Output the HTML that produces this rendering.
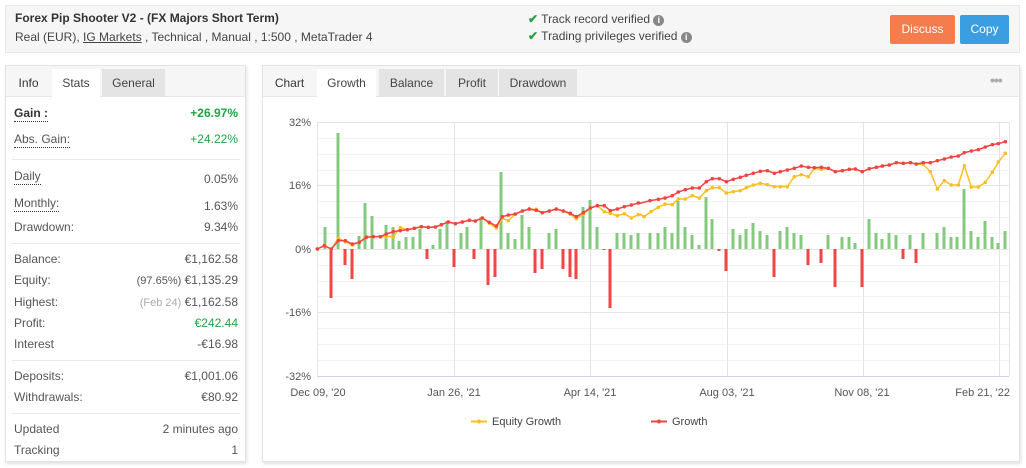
<!DOCTYPE html>
<html><head><meta charset="utf-8"><style>
*{margin:0;padding:0;box-sizing:border-box}
body{width:1026px;height:468px;background:#fff;font-family:"Liberation Sans",sans-serif;font-size:12px;color:#555;position:relative;overflow:hidden}
.a{position:absolute;white-space:nowrap}
.hdr{left:5px;top:5px;width:1015px;height:48px;background:#f6f6f6;border:1px solid #e6e6e6}
.panel{background:#fff;border:1px solid #e3e3e3;box-shadow:1px 2px 3px rgba(0,0,0,.12)}
.tabbar{background:#f6f6f6;border-bottom:1px solid #e6e6e6}
.tab{position:absolute;top:3px;height:28px;line-height:28px;text-align:center;font-size:12px;color:#444}
.g{background:#e4e4e4}
.w{background:#fff}
.l{left:8px}
.r{right:9px;text-align:right}
.row{position:absolute;left:0;width:241px;height:16px;line-height:16px}
.row span{position:absolute}
.dot{border-bottom:1px dotted #333}
.sep{position:absolute;left:6px;width:228px;height:1px;background:#e8e8e8}
.btn{position:absolute;top:15px;height:29px;line-height:29px;color:#fff;text-align:center;font-size:12px;border-radius:2px}
</style></head><body>
<div class="a hdr"></div>
<div class="a" style="left:15px;top:11px;font-weight:bold;color:#333;font-size:12px">Forex Pip Shooter V2 - (FX Majors Short Term)</div>
<div class="a" style="left:15px;top:30px;color:#444">Real (EUR), <span style="text-decoration:underline">IG Markets</span> , Technical , Manual , 1:500 , MetaTrader 4</div>
<div class="a" style="left:528px;top:12px;color:#444"><span style="color:#21a243;font-weight:bold">✔</span> Track record verified <span style="display:inline-block;width:11px;height:11px;border-radius:50%;background:#888;color:#fff;font-size:9px;line-height:11px;text-align:center;font-weight:bold">i</span></div>
<div class="a" style="left:528px;top:29px;color:#444"><span style="color:#21a243;font-weight:bold">✔</span> Trading privileges verified <span style="display:inline-block;width:11px;height:11px;border-radius:50%;background:#888;color:#fff;font-size:9px;line-height:11px;text-align:center;font-weight:bold">i</span></div>
<div class="btn" style="left:890px;width:65px;background:#f47c4d">Discuss</div>
<div class="btn" style="left:960px;width:49px;background:#3a9ee0">Copy</div>

<div class="a panel" style="left:5px;top:65px;width:241px;height:397px">
 <div class="a tabbar" style="left:0;top:0;width:239px;height:31px"></div>
 <div class="tab" style="left:0;width:45px;color:#333">Info</div>
 <div class="tab w" style="left:46px;width:48px;height:29px">Stats</div>
 <div class="tab g" style="left:96px;width:63px">General</div>
 <div class="row" style="top:39px"><span class="l dot" style="font-weight:bold;color:#333">Gain :</span><span class="r" style="color:#21a243;font-weight:bold">+26.97%</span></div>
 <div class="row" style="top:65px"><span class="l dot">Abs. Gain:</span><span class="r" style="color:#21a243">+24.22%</span></div>
 <div class="sep" style="top:93px"></div>
 <div class="row" style="top:102px"><span class="l dot">Daily</span><span class="r" style="top:3px">0.05%</span></div>
 <div class="row" style="top:129px"><span class="l dot">Monthly:</span><span class="r" style="top:3px">1.63%</span></div>
 <div class="row" style="top:153px"><span class="l">Drawdown:</span><span class="r">9.34%</span></div>
 <div class="sep" style="top:177px"></div>
 <div class="row" style="top:185px"><span class="l">Balance:</span><span class="r">€1,162.58</span></div>
 <div class="row" style="top:206px"><span class="l">Equity:</span><span class="r"><span style="position:static;font-size:11px">(97.65%)</span> €1,135.29</span></div>
 <div class="row" style="top:228px"><span class="l">Highest:</span><span class="r"><span style="position:static;font-size:11px;color:#aaa">(Feb 24)</span> €1,162.58</span></div>
 <div class="row" style="top:249px"><span class="l">Profit:</span><span class="r" style="color:#21a243">€242.44</span></div>
 <div class="row" style="top:270px"><span class="l">Interest</span><span class="r">-€16.98</span></div>
 <div class="sep" style="top:294px"></div>
 <div class="row" style="top:302px"><span class="l">Deposits:</span><span class="r">€1,001.06</span></div>
 <div class="row" style="top:323px"><span class="l">Withdrawals:</span><span class="r">€80.92</span></div>
 <div class="sep" style="top:347px"></div>
 <div class="row" style="top:355px"><span class="l">Updated</span><span class="r">2 minutes ago</span></div>
 <div class="row" style="top:376px"><span class="l">Tracking</span><span class="r">1</span></div>
</div>

<div class="a panel" style="left:262px;top:65px;width:758px;height:397px">
 <div class="a tabbar" style="left:0;top:0;width:756px;height:31px"></div>
 <div class="tab" style="left:0;width:53px;color:#333">Chart</div>
 <div class="tab w" style="left:54px;width:59px;height:29px">Growth</div>
 <div class="tab g" style="left:116px;width:65px">Balance</div>
 <div class="tab g" style="left:183px;width:52px">Profit</div>
 <div class="tab g" style="left:236px;width:78px">Drawdown</div>
 <div class="a" style="left:727px;top:6px;color:#aaa;font-size:14px;letter-spacing:-1px;font-weight:bold">•••</div>
</div>

<svg class="a" style="left:0;top:0" width="1026" height="468" font-family="Liberation Sans, sans-serif">
 <defs>
  <marker id="my" viewBox="0 0 4 4" refX="2" refY="2" markerWidth="2.4" markerHeight="2.4"><circle cx="2" cy="2" r="2" fill="#fbbf24"/></marker>
  <marker id="mr" viewBox="0 0 4 4" refX="2" refY="2" markerWidth="2.4" markerHeight="2.4"><circle cx="2" cy="2" r="2" fill="#ef4444"/></marker>
 </defs>
 <g stroke="#f2f2f2" stroke-width="1">
  <line x1="317" x2="1009" y1="138.5" y2="138.5"/><line x1="317" x2="1009" y1="154.5" y2="154.5"/><line x1="317" x2="1009" y1="170.5" y2="170.5"/>
  <line x1="317" x2="1009" y1="201.5" y2="201.5"/><line x1="317" x2="1009" y1="217.5" y2="217.5"/><line x1="317" x2="1009" y1="233.5" y2="233.5"/>
  <line x1="317" x2="1009" y1="265.5" y2="265.5"/><line x1="317" x2="1009" y1="281.5" y2="281.5"/><line x1="317" x2="1009" y1="296.5" y2="296.5"/>
  <line x1="317" x2="1009" y1="328.5" y2="328.5"/><line x1="317" x2="1009" y1="344.5" y2="344.5"/><line x1="317" x2="1009" y1="360.5" y2="360.5"/>
 </g>
 <g stroke="#e4e4e4" stroke-width="1">
  <line x1="317" x2="1009" y1="122.5" y2="122.5"/><line x1="317" x2="1009" y1="185.5" y2="185.5"/><line x1="317" x2="1009" y1="249.5" y2="249.5"/><line x1="317" x2="1009" y1="312.5" y2="312.5"/>
  <line x1="317.5" x2="317.5" y1="122" y2="376"/><line x1="454.5" x2="454.5" y1="122" y2="376"/><line x1="590.5" x2="590.5" y1="122" y2="376"/><line x1="727.5" x2="727.5" y1="122" y2="376"/><line x1="863.5" x2="863.5" y1="122" y2="376"/><line x1="999.5" x2="999.5" y1="122" y2="376"/><line x1="1009.5" x2="1009.5" y1="122" y2="376"/>
 </g>
 <line x1="317" x2="1009" y1="376.5" y2="376.5" stroke="#c8d4e6"/>
 <g font-size="11" fill="#555" text-anchor="end">
  <text x="311" y="126">32%</text><text x="311" y="189">16%</text><text x="311" y="253">0%</text><text x="311" y="316">-16%</text><text x="311" y="380">-32%</text>
 </g>
 <g font-size="11" fill="#555" text-anchor="middle">
  <text x="318" y="396">Dec 09, '20</text><text x="454" y="396">Jan 26, '21</text><text x="590" y="396">Apr 14, '21</text><text x="727" y="396">Aug 03, '21</text><text x="862" y="396">Nov 08, '21</text><text x="1010" y="396" text-anchor="end">Feb 21, '22</text>
 </g>
 <g fill="#84c97d">
  <rect x="323.5" y="227" width="3" height="22"/><rect x="336.5" y="133" width="3" height="116"/><rect x="357.5" y="236" width="3" height="13"/><rect x="363.5" y="203" width="3" height="46"/><rect x="370.5" y="216" width="3" height="33"/><rect x="384.5" y="225" width="3" height="24"/><rect x="391.5" y="227" width="3" height="22"/><rect x="397.5" y="241" width="3" height="8"/><rect x="404.5" y="237" width="3" height="12"/><rect x="411.5" y="237" width="3" height="12"/><rect x="418.5" y="229" width="3" height="20"/><rect x="431.5" y="245" width="3" height="4"/><rect x="438.5" y="229" width="3" height="20"/><rect x="445.5" y="221" width="3" height="28"/><rect x="459.5" y="233" width="3" height="16"/><rect x="465.5" y="227" width="3" height="22"/><rect x="479.5" y="217" width="3" height="32"/><rect x="499.5" y="172" width="3" height="77"/><rect x="506.5" y="233" width="3" height="16"/><rect x="513.5" y="239" width="3" height="10"/><rect x="520.5" y="215" width="3" height="34"/><rect x="527.5" y="227" width="3" height="22"/><rect x="547.5" y="233" width="3" height="16"/><rect x="554.5" y="229" width="3" height="20"/><rect x="581.5" y="207" width="3" height="42"/><rect x="588.5" y="200" width="3" height="49"/><rect x="595.5" y="227" width="3" height="22"/><rect x="615.5" y="233" width="3" height="16"/><rect x="622.5" y="233" width="3" height="16"/><rect x="629.5" y="235" width="3" height="14"/><rect x="636.5" y="233" width="3" height="16"/>
  <rect x="648.5" y="233" width="3" height="16"/><rect x="656.5" y="233" width="3" height="16"/><rect x="663.5" y="227" width="3" height="22"/><rect x="670.5" y="233" width="3" height="16"/><rect x="676.5" y="201" width="3" height="48"/><rect x="683.5" y="227" width="3" height="22"/><rect x="690.5" y="235" width="3" height="14"/><rect x="697.5" y="245" width="3" height="4"/><rect x="704.5" y="197" width="3" height="52"/><rect x="710.5" y="219" width="3" height="30"/><rect x="731.5" y="229" width="3" height="20"/><rect x="738.5" y="235" width="3" height="14"/><rect x="744.5" y="229" width="3" height="20"/><rect x="751.5" y="223" width="3" height="26"/><rect x="758.5" y="231" width="3" height="18"/><rect x="765.5" y="235" width="3" height="14"/><rect x="778.5" y="231" width="3" height="18"/><rect x="785.5" y="227" width="3" height="22"/><rect x="792.5" y="233" width="3" height="16"/><rect x="799.5" y="235" width="3" height="14"/><rect x="826.5" y="235" width="3" height="14"/><rect x="840.5" y="237" width="3" height="12"/><rect x="847.5" y="237" width="3" height="12"/><rect x="853.5" y="243" width="3" height="6"/><rect x="867.5" y="219" width="3" height="30"/><rect x="874.5" y="233" width="3" height="16"/><rect x="880.5" y="239" width="3" height="10"/><rect x="887.5" y="233" width="3" height="16"/><rect x="894.5" y="235" width="3" height="14"/><rect x="908.5" y="235" width="3" height="14"/><rect x="921.5" y="233" width="3" height="16"/><rect x="935.5" y="233" width="3" height="16"/><rect x="942.5" y="227" width="3" height="22"/><rect x="949.5" y="237" width="3" height="12"/><rect x="955.5" y="237" width="3" height="12"/><rect x="962.5" y="189" width="3" height="60"/><rect x="969.5" y="231" width="3" height="18"/><rect x="976.5" y="237" width="3" height="12"/><rect x="983.5" y="221" width="3" height="28"/><rect x="990.5" y="237" width="3" height="12"/><rect x="996.5" y="243" width="3" height="6"/><rect x="1003.5" y="231" width="3" height="18"/>
 </g>
 <g fill="#f44545">
  <rect x="329.5" y="249" width="3" height="49"/><rect x="343.5" y="249" width="3" height="16"/><rect x="350.5" y="249" width="3" height="30"/><rect x="425.5" y="249" width="3" height="10"/><rect x="452.5" y="249" width="3" height="18"/><rect x="472.5" y="249" width="3" height="10"/><rect x="486.5" y="249" width="3" height="36"/><rect x="493.5" y="249" width="3" height="28"/><rect x="533.5" y="249" width="3" height="24"/><rect x="540.5" y="249" width="3" height="20"/><rect x="561.5" y="249" width="3" height="20"/><rect x="568.5" y="249" width="3" height="28"/><rect x="574.5" y="249" width="3" height="30"/><rect x="602.5" y="249" width="3" height="1"/><rect x="608.5" y="249" width="3" height="59"/>
  <rect x="717.5" y="249" width="3" height="2"/><rect x="724.5" y="249" width="3" height="22"/><rect x="772.5" y="249" width="3" height="28"/><rect x="806.5" y="249" width="3" height="16"/><rect x="819.5" y="249" width="3" height="14"/><rect x="833.5" y="249" width="3" height="38"/><rect x="860.5" y="249" width="3" height="38"/><rect x="901.5" y="249" width="3" height="10"/><rect x="914.5" y="249" width="3" height="14"/>
 </g>
 <g transform="translate(260,100) scale(0.33333)" fill="none" stroke="#fbbf24" stroke-width="4.5" marker-mid="url(#my)" marker-start="url(#my)">
  <polyline points="172,447 193,437 214,447 235,415 256,425 277,435 298,427 319,410 340,410 361,410 379,410 400,410 421,383 442,389 463,385 484,380 505,382 526,381 544,374 565,366 586,371 607,366 628,361 646,363 667,354 688,370 709,384 727,355 745,362 766,342 787,333 808,327 829,328 847,338 868,333 889,327 910,333 931,343 949,356 970,343 991,324 1012,317 1033,335 1051,340 1072,347 1093,341 1114,354 1135,344 1145,345"/>
 </g>
 <g transform="translate(640,100) scale(0.33333)" fill="none" stroke="#fbbf24" stroke-width="4.5" marker-mid="url(#my)" marker-end="url(#my)">
  <polyline points="0,342 12,350 33,335 55,322 75,312 97,314 115,297 136,297 157,287 178,294 199,272 217,263 238,263 259,279 280,275 301,272 319,263 340,255 361,250 382,254 403,260 421,260 442,260 463,230 484,224 505,230 523,205 544,208 565,205 586,215 607,212 628,208 646,207 667,215 688,206 709,202 727,198 748,195 769,188 790,190 811,188 829,192 850,193 871,215 892,267 913,242 934,255 955,255 973,197 994,261 1015,261 1036,247 1057,217 1075,186 1096,160"/>
 </g>
 <g transform="translate(260,100) scale(0.33333)" fill="none" stroke="#ef4444" stroke-width="4.5" marker-mid="url(#mr)" marker-start="url(#mr)">
  <polyline points="172,447 193,437 214,447 235,422 256,422 277,432 298,427 319,412 340,410 361,410 379,402 400,395 421,392 442,389 463,385 484,380 505,382 526,381 544,374 565,366 586,371 607,366 628,361 646,363 667,354 688,367 709,378 727,350 745,345 766,342 787,333 808,327 829,331 847,338 868,333 889,327 910,333 931,340 949,350 970,338 991,324 1012,317 1033,317 1051,332 1072,327 1093,320 1114,315 1135,309 1145,309"/>
 </g>
 <g transform="translate(640,100) scale(0.33333)" fill="none" stroke="#ef4444" stroke-width="4.5" marker-mid="url(#mr)" marker-end="url(#mr)">
  <polyline points="0,310 30,302 55,298 75,294 97,287 115,276 136,269 157,264 178,264 199,245 217,236 238,236 259,245 280,238 301,232 319,226 340,220 361,214 382,212 403,220 421,215 442,210 463,205 484,198 505,202 523,203 544,202 565,205 586,215 607,212 628,208 646,207 667,215 688,206 709,202 727,198 748,195 769,188 790,190 811,188 829,192 850,188 871,188 892,182 913,177 934,171 955,168 973,158 994,153 1015,149 1036,141 1057,134 1075,131 1096,125"/>
 </g>
 <line x1="471" x2="487" y1="421.5" y2="421.5" stroke="#fbbf24" stroke-width="2"/><circle cx="479" cy="421.5" r="2" fill="#fbbf24"/>
 <text x="492" y="425" font-size="11" fill="#444">Equity Growth</text>
 <line x1="651" x2="667" y1="421.5" y2="421.5" stroke="#ef4444" stroke-width="2"/><circle cx="659" cy="421.5" r="2" fill="#ef4444"/>
 <text x="672" y="425" font-size="11" fill="#444">Growth</text>
</svg>
</body></html>
